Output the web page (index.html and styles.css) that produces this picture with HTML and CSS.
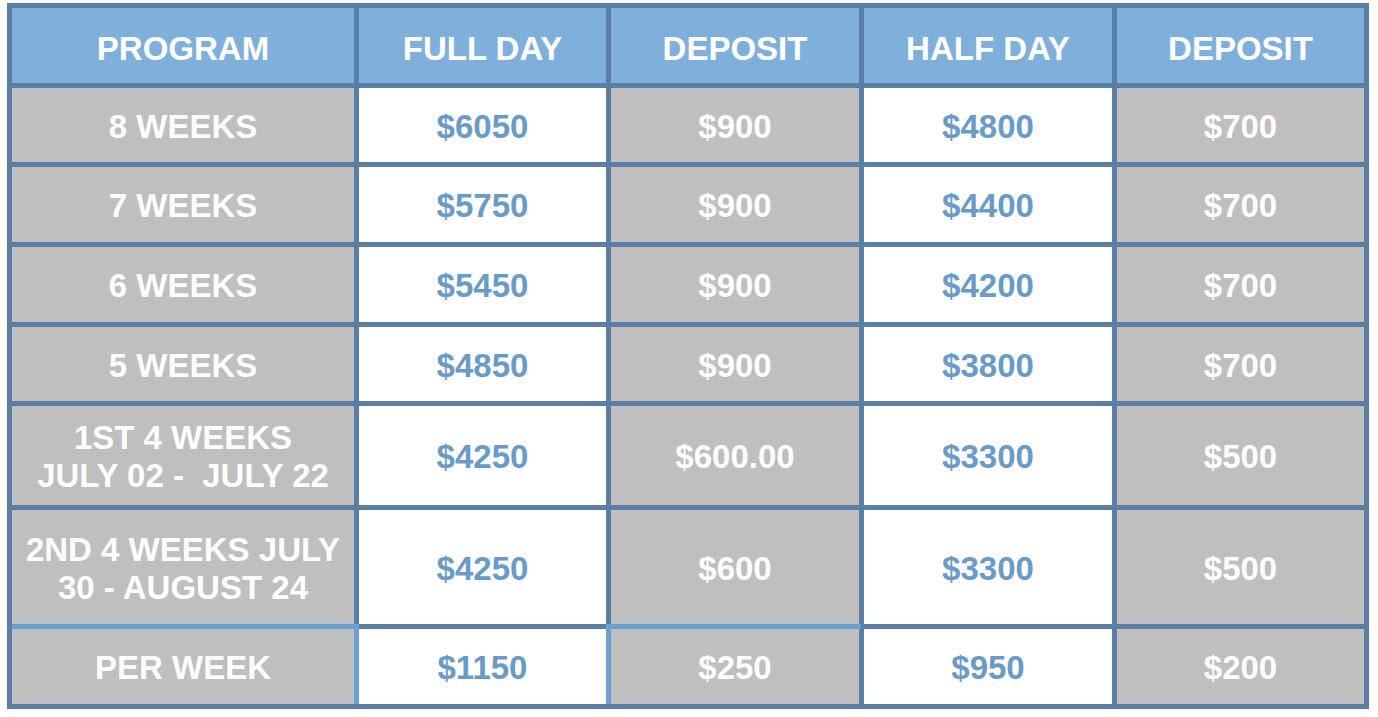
FILE: index.html
```html
<!DOCTYPE html>
<html>
<head>
<meta charset="utf-8">
<link rel="stylesheet" href="styles.css">
</head>
<body>
<div class="grid">
  <div class="c head">PROGRAM</div>
  <div class="c head">FULL DAY</div>
  <div class="c head">DEPOSIT</div>
  <div class="c head">HALF DAY</div>
  <div class="c head">DEPOSIT</div>

  <div class="c gray">8 WEEKS</div>
  <div class="c white">$6050</div>
  <div class="c gray">$900</div>
  <div class="c white">$4800</div>
  <div class="c gray">$700</div>

  <div class="c gray">7 WEEKS</div>
  <div class="c white">$5750</div>
  <div class="c gray">$900</div>
  <div class="c white">$4400</div>
  <div class="c gray">$700</div>

  <div class="c gray">6 WEEKS</div>
  <div class="c white">$5450</div>
  <div class="c gray">$900</div>
  <div class="c white">$4200</div>
  <div class="c gray">$700</div>

  <div class="c gray">5 WEEKS</div>
  <div class="c white">$4850</div>
  <div class="c gray">$900</div>
  <div class="c white">$3800</div>
  <div class="c gray">$700</div>

  <div class="c gray">1ST 4 WEEKS<br>JULY 02 -&nbsp; JULY 22</div>
  <div class="c white">$4250</div>
  <div class="c gray">$600.00</div>
  <div class="c white">$3300</div>
  <div class="c gray">$500</div>

  <div class="c gray">2ND 4 WEEKS JULY<br>30 - AUGUST 24</div>
  <div class="c white">$4250</div>
  <div class="c gray">$600</div>
  <div class="c white">$3300</div>
  <div class="c gray">$500</div>

  <div class="c gray last-a">PER WEEK</div>
  <div class="c white">$1150</div>
  <div class="c gray last-c">$250</div>
  <div class="c white">$950</div>
  <div class="c gray">$200</div>
</div>
</body>
</html>
```

FILE: styles.css
```css
html, body {
  margin: 0;
  padding: 0;
  background: #ffffff;
}

body {
  padding: 3px 0 0 7px;
  font-family: "Liberation Sans", Arial, sans-serif;
}

.grid {
  display: grid;
  grid-template-columns: 342px 247px 248px 248px 247px;
  grid-template-rows: 75px 74px 75px 75px 74px 99px 114px 75px;
  gap: 5px;
  padding: 5px;
  width: max-content;
  background: #5b7fa4;
}

.c {
  display: flex;
  align-items: center;
  justify-content: center;
  text-align: center;
  font-size: 33px;
  font-weight: bold;
  line-height: 38px;
  padding-top: 3px;
  position: relative;
}

.head {
  background: #7fb0dc;
  color: #ffffff;
  padding-top: 7px;
}

.gray {
  background: #bfbfbf;
  color: #fdfdfd;
}

.white {
  background: #ffffff;
  color: #6a9ac8;
}

.last-a::before {
  content: "";
  position: absolute;
  top: -5px;
  left: 0;
  right: -5px;
  height: 5px;
  background: #6a9fd0;
}

.last-a::after {
  content: "";
  position: absolute;
  top: 0;
  bottom: 0;
  right: -5px;
  width: 5px;
  background: #6a9fd0;
}

.last-c::before {
  content: "";
  position: absolute;
  top: -5px;
  left: -5px;
  right: -2px;
  height: 5px;
  background: #6a9fd0;
}

.last-c::after {
  content: "";
  position: absolute;
  top: 0;
  bottom: 0;
  left: -5px;
  width: 5px;
  background: #6a9fd0;
}
```
